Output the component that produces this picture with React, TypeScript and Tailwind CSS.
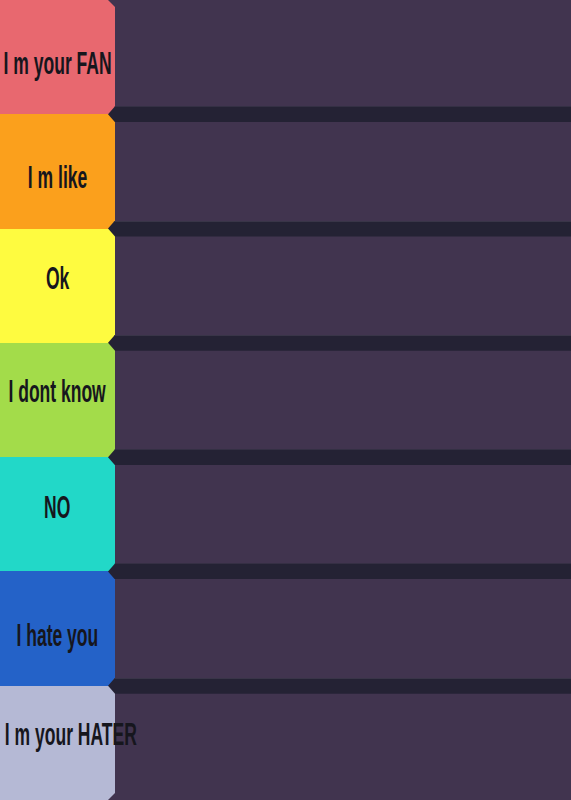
const tiers = [
  { label: 'I m your FAN', bg: 'bg-[#e8686f]', shift: 'translate-y-[6px]' },
  { label: 'I m like', bg: 'bg-[#fba01c]', shift: 'translate-y-[6px]' },
  { label: 'Ok', bg: 'bg-[#fefb40]', shift: '-translate-y-[7px]' },
  { label: 'I dont know', bg: 'bg-[#a3dc4a]', shift: '-translate-y-[8px]' },
  { label: 'NO', bg: 'bg-[#22d8c8]', shift: '-translate-y-[7px]' },
  { label: 'I hate you', bg: 'bg-[#2462c8]', shift: 'translate-y-[7px]' },
  { label: 'I m your HATER', bg: 'bg-[#b5b9d5]', shift: '-translate-y-[8px] translate-x-[13px]' },
];

export default function App() {
  return (
    <div className="flex h-[800px] w-full flex-col overflow-hidden bg-[#41344f]">
      {tiers.map((tier, i) => (
        <div key={tier.label} className="relative flex flex-1">
          {/* label */}
          <div className={`flex w-[115px] shrink-0 items-center justify-center ${tier.bg}`}>
            <span
              className={`inline-block whitespace-nowrap text-[31px] font-bold leading-none text-[#16161d] scale-x-[0.565] ${tier.shift}`}
              style={{ fontFamily: '"Liberation Sans", Arial, sans-serif' }}
            >
              {tier.label}
            </span>
          </div>
          <div className="flex-1 bg-[#41344f]" />

          {/* chamfer corners at the very top and bottom */}
          {i === 0 && (
            <div className="absolute left-[108px] top-0 h-[7px] w-[7px] bg-[#41344f] [clip-path:polygon(0_0,100%_0,100%_100%)]" />
          )}
          {i === tiers.length - 1 && (
            <div className="absolute bottom-0 left-[108px] h-[7px] w-[7px] bg-[#41344f] [clip-path:polygon(100%_0,100%_100%,0_100%)]" />
          )}

          {/* separator bar with arrow tip */}
          {i < tiers.length - 1 && (
            <div className="absolute bottom-[-8px] left-[108px] right-0 z-10 h-4 border-t border-[#393548] bg-[#242234] [clip-path:polygon(7px_0,100%_0,100%_100%,7px_100%,0_50%)]" />
          )}
        </div>
      ))}
    </div>
  );
}
